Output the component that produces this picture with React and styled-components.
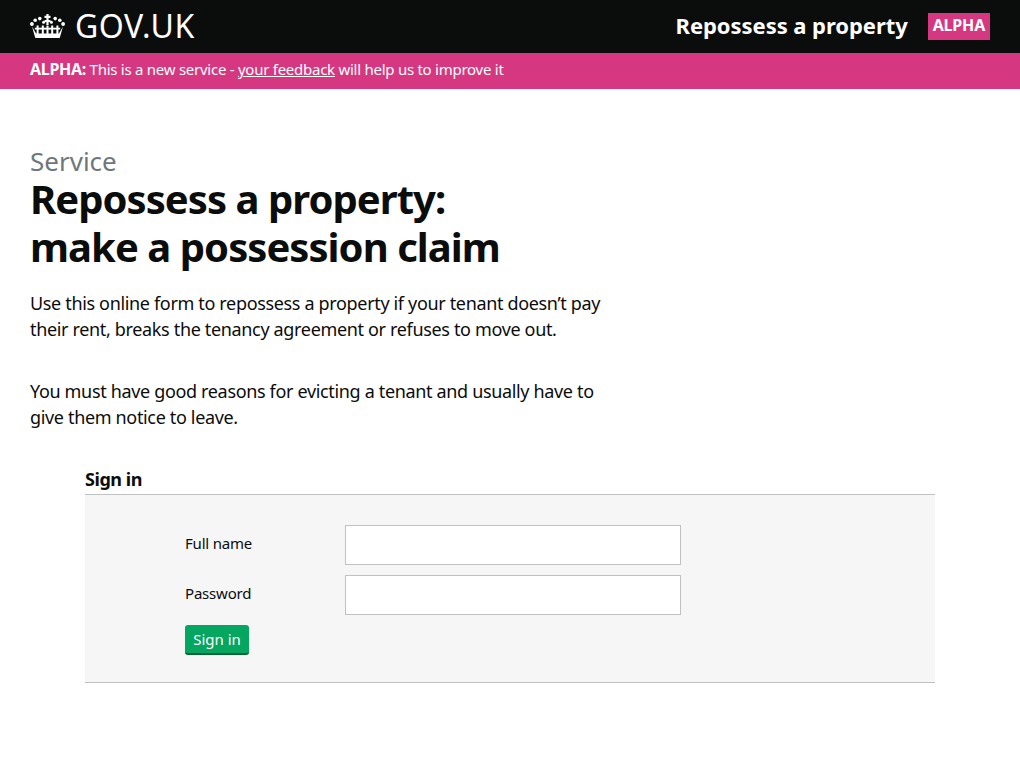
import styled, { createGlobalStyle } from 'styled-components'

const GlobalStyle = createGlobalStyle`
  body {
    margin: 0;
    background: #fff;
    color: #0b0c0c;
    font-family: "Noto Sans", "Open Sans", sans-serif;
  }
`

const Header = styled.header`
  background: #0b0c0c;
  height: 53px;
  padding: 0 30px;
  display: flex;
  align-items: center;
  justify-content: space-between;
`

const Logo = styled.a`
  display: flex;
  align-items: center;
  gap: 10px;
  color: #fff;
  text-decoration: none;
  font-size: 32px;
  line-height: 36px;
  letter-spacing: 0.5px;
  padding-bottom: 2px;
`

const ServiceName = styled.div`
  display: flex;
  align-items: center;
  gap: 20px;
`

const ServiceTitle = styled.span`
  color: #fff;
  font-size: 22px;
  line-height: 26px;
  font-weight: 700;
  letter-spacing: -0.05px;
  padding-bottom: 3px;
`

const PhaseTag = styled.strong`
  background: #d53880;
  color: #fff;
  font-size: 16px;
  line-height: 25px;
  padding: 0 5px 2px;
  letter-spacing: -0.2px;
`

const PhaseBanner = styled.div`
  background: #d53880;
  color: #fff;
  height: 36px;
  padding: 0 30px;
  font-size: 15px;
  line-height: 33px;
  letter-spacing: -0.26px;

  strong {
    font-size: 16px;
    letter-spacing: -0.3px;
  }

  a {
    color: #fff;
  }
`

const Main = styled.main`
  padding: 59px 30px 0;
`

const Caption = styled.div`
  color: #6f777b;
  font-size: 26px;
  line-height: 27px;
`

const Title = styled.h1`
  margin: 0;
  font-size: 40px;
  line-height: 48px;
  font-weight: 700;
  letter-spacing: -0.95px;
`

const Lead = styled.p`
  margin: ${(p) => p.$top}px 0 0;
  width: 590px;
  font-size: 18px;
  line-height: 26px;
  letter-spacing: -0.34px;
`

const SignIn = styled.section`
  margin: 37px 55px 0;
`

const SignInHeading = styled.h2`
  margin: 0;
  padding-bottom: 2px;
  font-size: 18px;
  line-height: 25px;
  font-weight: 700;
  letter-spacing: -0.45px;
  border-bottom: 1px solid #bfc1c3;
`

const SignInPanel = styled.form`
  background: #f6f6f6;
  border-bottom: 1px solid #bfc1c3;
  padding: 30px 100px 27px;
  display: flex;
  flex-direction: column;
  gap: 10px;
`

const Field = styled.div`
  display: flex;
  align-items: center;
`

const FieldLabel = styled.label`
  width: 160px;
  font-size: 15px;
  line-height: 20px;
  letter-spacing: -0.2px;
  padding-bottom: 4px;
`

const TextInput = styled.input`
  width: 336px;
  height: 40px;
  box-sizing: border-box;
  background: #fff;
  border: 1px solid #bfc1c3;
`

const SubmitButton = styled.button`
  align-self: flex-start;
  width: 64px;
  height: 30px;
  padding: 0;
  background: #05a660;
  color: #fff;
  border: 0;
  border-bottom: 2px solid #006435;
  border-radius: 3px;
  font-family: inherit;
  font-size: 15px;
`

const crossXs = [7.6, 12.8, 17.5, 22.2, 27.4]
const dots = [
  [1.9, 10, 1.9],
  [5.2, 6.2, 1.8],
  [9.8, 4.6, 1.8],
  [13.6, 8.2, 1.5],
  [21.4, 8.2, 1.5],
  [25.2, 4.6, 1.8],
  [29.8, 6.2, 1.8],
  [33.1, 10, 1.9],
]

const Crown = () => (
  <svg width="35" height="24" viewBox="0 0 35 24" fill="#fff" aria-hidden="true">
    <path d="M16.4 0h2.2v1.8h1.9v2.1h-1.9v2h1.9V8h-1.9v3h-2.2V8h-1.9V5.900h1.900v-2h-1.900V1.800h1.900z" />
    {dots.map(([cx, cy, r]) => (
      <circle key={`${cx}-${cy}`} cx={cx} cy={cy} r={r} />
    ))}
    {crossXs.map((x) => (
      <path key={x} d={`M${x - 1} 11.500h2v2.200h1.800v1.900H${x + 1}V20h-2v-4.400h-1.800v-1.900h1.800z`} />
    ))}
    <path d="M2 12.500 6 19.500h23l4-7-2.400 8.500-.9 3H5.300l-.9-3z" />
  </svg>
)

const App = () => {
  return (
    <>
      <GlobalStyle />
      <Header>
        <Logo href="#">
          <Crown />
          GOV.UK
        </Logo>
        <ServiceName>
          <ServiceTitle>Repossess a property</ServiceTitle>
          <PhaseTag>ALPHA</PhaseTag>
        </ServiceName>
      </Header>
      <PhaseBanner>
        <strong>ALPHA:</strong> This is a new service - <a href="#">your feedback</a> will help us to improve it
      </PhaseBanner>
      <Main>
        <Caption>Service</Caption>
        <Title>
          Repossess a property:
          <br />
          make a possession claim
        </Title>
        <Lead $top={19}>
          Use this online form to repossess a property if your tenant doesn’t pay their rent, breaks the tenancy
          agreement or refuses to move out.
        </Lead>
        <Lead $top={36}>
          You must have good reasons for evicting a tenant and usually have to give them notice to leave.
        </Lead>
        <SignIn>
          <SignInHeading>Sign in</SignInHeading>
          <SignInPanel>
            <Field>
              <FieldLabel htmlFor="name">Full name</FieldLabel>
              <TextInput id="name" />
            </Field>
            <Field>
              <FieldLabel htmlFor="password">Password</FieldLabel>
              <TextInput id="password" type="password" />
            </Field>
            <SubmitButton type="button">Sign in</SubmitButton>
          </SignInPanel>
        </SignIn>
      </Main>
    </>
  )
}

export default App
